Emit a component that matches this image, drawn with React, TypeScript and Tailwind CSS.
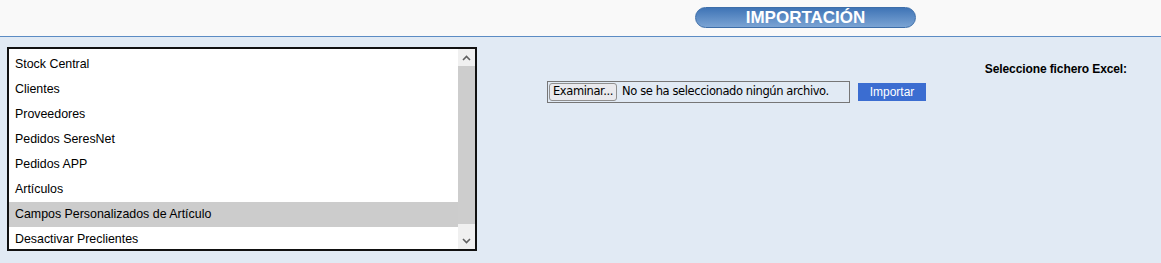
import React from "react";

const items = [
  "Stock Central",
  "Clientes",
  "Proveedores",
  "Pedidos SeresNet",
  "Pedidos APP",
  "Artículos",
  "Campos Personalizados de Artículo",
  "Desactivar Preclientes",
];

export default function App() {
  return (
    <div className="w-[1161px] h-[263px] bg-[#e1eaf4] font-['Liberation_Sans',Arial,sans-serif] text-[12px] text-black overflow-hidden">
      <div className="h-[37px] bg-[#f9f9f9] border-b border-[#5b8cc4] flex justify-start pl-[695px] pt-[7px]">
        <div className="w-[221px] h-[21px] rounded-full border border-[#3d6ea9] bg-gradient-to-b from-[#3f74b6] to-[#7ba4d3] flex items-center justify-center">
          <span className="text-white font-bold text-[17px] leading-none">IMPORTACIÓN</span>
        </div>
      </div>
      <div className="flex pt-[10px]">
        <div className="ml-[7px] w-[470px] h-[204px] border-2 border-[#111] bg-white flex overflow-hidden">
          <div className="flex-1 flex flex-col pt-[3px] overflow-hidden">
            {items.map((it, i) => (
              <div
                key={it}
                className={
                  "h-[25px] shrink-0 flex items-center pl-[6px] text-[12.4px] " +
                  (i === 6 ? "bg-[#cccccc]" : "")
                }
              >
                {it}
              </div>
            ))}
          </div>
          <div className="w-[17px] bg-[#f0f0f0] flex flex-col">
            <div className="h-[17px] flex items-center justify-center">
              <svg width="9" height="6" viewBox="0 0 9 6">
                <path d="M1 5 L4.5 1.5 L8 5" fill="none" stroke="#606060" strokeWidth="1.6" />
              </svg>
            </div>
            <div className="h-[158px] bg-[#cdcdcd]" />
            <div className="flex-1" />
            <div className="h-[17px] flex items-center justify-center">
              <svg width="9" height="6" viewBox="0 0 9 6">
                <path d="M1 1 L4.5 4.5 L8 1" fill="none" stroke="#606060" strokeWidth="1.6" />
              </svg>
            </div>
          </div>
        </div>
        <div className="flex-1">
          <div className="flex justify-end pr-[34px] pt-[13px]">
            <span className="font-bold tracking-[-0.1px]">Seleccione fichero Excel:</span>
          </div>
          <div className="flex items-center pl-[70px] mt-[3px]">
            <div className="w-[303px] h-[22px] border border-[#767676] flex items-center bg-[#e1eaf4]">
              <div className="ml-[1px] h-[18px] px-[3px] border border-[#8f8f8f] rounded-[3px] bg-[#e9e9ed] flex items-center font-['DejaVu_Sans',sans-serif] text-[11.5px] tracking-[-0.4px] text-black">
                Examinar...
              </div>
              <span className="ml-[5px] font-['DejaVu_Sans',sans-serif] text-[11.5px] tracking-[-0.4px] text-black">
                No se ha seleccionado ningún archivo.
              </span>
            </div>
            <div className="ml-[8px] w-[68px] h-[18px] bg-[#3b6dd1] text-white flex items-center justify-center text-[12px]">
              Importar
            </div>
          </div>
        </div>
      </div>
    </div>
  );
}
